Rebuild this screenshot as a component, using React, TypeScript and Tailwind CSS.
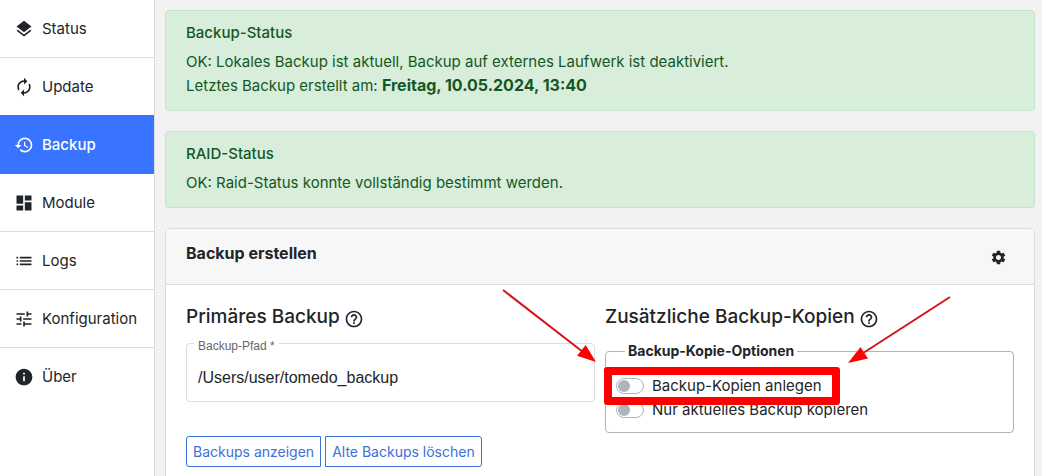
import { useState } from 'react';
import type { ReactNode } from 'react';
import {
    MdAutorenew,
    MdDashboard,
    MdHelpOutline,
    MdHistory,
    MdInfo,
    MdLayers,
    MdList,
    MdSettings,
    MdTune,
} from 'react-icons/md';

export default function App() {
    return (
        <div className="flex min-h-screen bg-[#f2f2f2] font-[Inter,'Liberation_Sans',sans-serif] text-[15px] leading-6 text-[#212529]">
            <Sidebar />
            <main className="flex min-w-0 flex-1 flex-col gap-5 pt-[10px] pr-[7px] pl-[10px]">
                <StatusAlert title="Backup-Status">
                    <p>OK: Lokales Backup ist aktuell, Backup auf externes Laufwerk ist deaktiviert.</p>
                    <p>
                        Letztes Backup erstellt am:{' '}
                        <strong className="text-base leading-5 font-bold">Freitag, 10.05.2024, 13:40</strong>
                    </p>
                </StatusAlert>
                <StatusAlert title="RAID-Status">
                    <p>OK: Raid-Status konnte vollständig bestimmt werden.</p>
                </StatusAlert>
                <BackupCard />
            </main>
        </div>
    );
}

function Sidebar() {
    return (
        <nav className="w-[155px] shrink-0 border-r border-[#dcdcdc] bg-white">
            <NavItem href="#status" icon={<MdLayers size={20} />} label="Status" />
            <NavItem href="#update" icon={<MdAutorenew size={20} />} label="Update" />
            <NavItem href="#backup" icon={<MdHistory size={20} />} label="Backup" active />
            <NavItem href="#module" icon={<MdDashboard size={20} />} label="Module" />
            <NavItem href="#logs" icon={<MdList size={20} />} label="Logs" />
            <NavItem href="#konfiguration" icon={<MdTune size={20} />} label="Konfiguration" />
            <NavItem href="#ueber" icon={<MdInfo size={20} />} label="Über" last />
        </nav>
    );
}

type NavItemProps = { href: string; icon: ReactNode; label: string; active?: boolean; last?: boolean };

function NavItem({ href, icon, label, active, last }: NavItemProps) {
    const look = active
        ? '-mt-px border-b border-[#3874ff] bg-[#3874ff] pt-[18px] font-medium text-white'
        : last
          ? 'pt-[17px]'
          : 'border-b border-[#dcdcdc] pt-[17px]';

    return (
        <a
            href={href}
            aria-current={active ? 'page' : undefined}
            className={`flex items-center gap-2 pr-3 pb-4 pl-[14px] ${look}`}
        >
            {icon}
            <span>{label}</span>
        </a>
    );
}

function StatusAlert({ title, children }: { title: string; children: ReactNode }) {
    return (
        <section className="rounded border border-[#c3e6cb] bg-[#d8eeda] px-5 py-3 text-[#155724]">
            <h2 className="mb-2 leading-[19px] font-medium">{title}</h2>
            {children}
        </section>
    );
}

function BackupCard() {
    return (
        <section className="flex-1 rounded-t border border-b-0 border-[#dcdcdc] bg-white">
            <header className="flex items-start justify-between border-b border-[#dcdcdc] bg-[#f7f7f7] px-5 pt-3 pb-[11px]">
                <h2 className="text-base leading-6 font-bold">Backup erstellen</h2>
                <button type="button" aria-label="Einstellungen" className="flex size-8 items-center justify-center">
                    <MdSettings size={17} />
                </button>
            </header>
            <div className="grid grid-cols-2 gap-[10px] px-5 pt-5">
                <PrimaryBackup />
                <BackupCopies />
            </div>
        </section>
    );
}

function SectionTitle({ children }: { children: ReactNode }) {
    return (
        <h3 className="flex items-center gap-1 text-[19px] leading-6 font-medium">
            {children}
            <MdHelpOutline size={20} className="mt-1" />
        </h3>
    );
}

function PrimaryBackup() {
    const [path, setPath] = useState('/Users/user/tomedo_backup');

    return (
        <div>
            <SectionTitle>Primäres Backup</SectionTitle>
            <div className="relative mt-[14px] rounded border border-[#dcdcdc] font-['Liberation_Sans',sans-serif]">
                <label
                    htmlFor="backup-path"
                    className="absolute -top-2 left-[7px] bg-white px-1 text-xs leading-5 text-[#666]"
                >
                    Backup-Pfad *
                </label>
                <input
                    id="backup-path"
                    value={path}
                    onChange={(e) => setPath(e.target.value)}
                    className="block w-full bg-transparent px-[11px] pt-[22px] pb-[11px] text-base outline-none"
                />
            </div>
            <div className="mt-[34px] flex gap-1 text-sm">
                <button type="button" className="rounded-l-[3px] border border-[#3b71d9] px-[6px] py-1 leading-[21px] text-[#3b71d9]">
                    Backups anzeigen
                </button>
                <button type="button" className="rounded-r-[3px] border border-[#3b71d9] px-[6px] py-1 leading-[21px] text-[#3b71d9]">
                    Alte Backups löschen
                </button>
            </div>
        </div>
    );
}

function BackupCopies() {
    return (
        <div className="relative">
            <SectionTitle>Zusätzliche Backup-Kopien</SectionTitle>
            <fieldset className="mt-3 rounded border border-[#adb5bd] px-[10px] pb-[10px]">
                <legend className="ml-[9px] px-[3px] text-sm font-bold">Backup-Kopie-Optionen</legend>
                <div className="relative mt-[13px]">
                    <Switch id="create-copies" label="Backup-Kopien anlegen" />
                    <div className="pointer-events-none absolute -top-[7px] -left-3 z-10 h-[38px] w-[236px] rounded-[3px] border-8 border-[#f00]" />
                </div>
                <Switch id="latest-only" label="Nur aktuelles Backup kopieren" />
            </fieldset>
            <Arrows />
        </div>
    );
}

function Switch({ id, label }: { id: string; label: string }) {
    return (
        <div className="flex items-center gap-2">
            <input
                id={id}
                type="checkbox"
                role="switch"
                className="h-4 w-7 shrink-0 appearance-none rounded-full border border-[#adb5bd] bg-white before:m-px before:block before:size-3 before:rounded-full before:bg-[#adb5bd] checked:before:ml-[13px]"
            />
            <label htmlFor={id}>{label}</label>
        </div>
    );
}

function Arrows() {
    return (
        <svg
            className="pointer-events-none absolute -top-[25px] -left-[105px] z-20"
            width="460"
            height="90"
            viewBox="0 0 460 90"
            aria-hidden="true"
        >
            <path d="M3 10L83 72" stroke="#d5131a" strokeWidth="2" />
            <path d="M96 82L85.700 65L77 75.700Z" fill="#f00" />
            <path d="M450 17L364 72.500" stroke="#d5131a" strokeWidth="2" />
            <path d="M348 83L360.500 67L368 78.500Z" fill="#f00" />
        </svg>
    );
}
